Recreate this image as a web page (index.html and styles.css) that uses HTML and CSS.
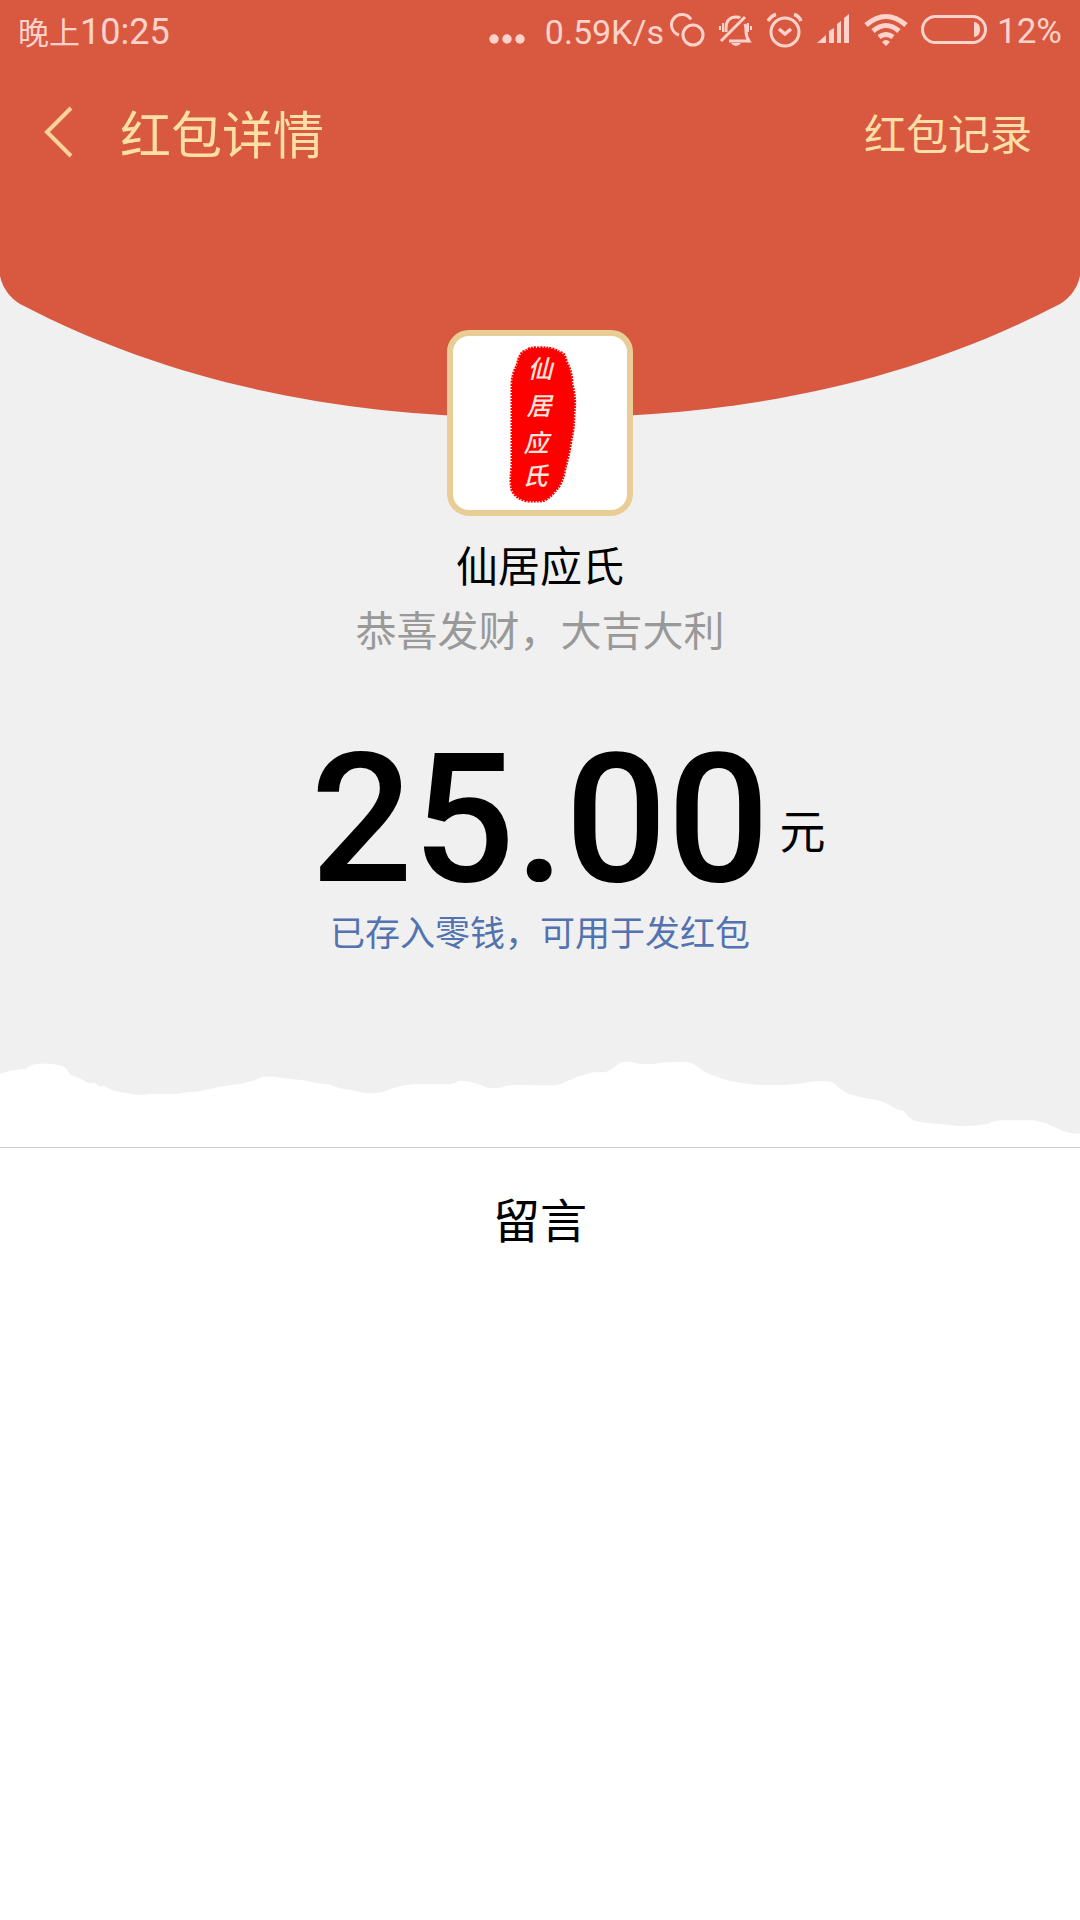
FILE: index.html
```html
<!DOCTYPE html>
<html lang="zh-CN">
<head>
<meta charset="utf-8">
<meta name="viewport" content="width=device-width, initial-scale=1">
<title>红包详情</title>
<link rel="stylesheet" href="styles.css">
</head>
<body>
<header class="top">
  <div class="status">
    <span class="clock"><span class="clock-part">晚上</span>10:25</span>
    <div class="status-right">
      <svg class="ico dots" width="32" height="62" viewBox="490 0 32 62" aria-hidden="true"><g class="fill"><circle cx="495" cy="39" r="4.7"/><circle cx="508" cy="39" r="4.7"/><circle cx="521" cy="39" r="4.7"/></g></svg>
      <span class="speed">0.59K/s</span>
      <svg class="ico" width="30" height="62" viewBox="676 0 30 62" aria-hidden="true"><g class="line"><circle cx="693" cy="35" r="10"/><path d="M679 35A10.500 10.500 0 1 1 691 19.500"/></g></svg>
      <svg class="ico" width="36" height="62" viewBox="718 0 36 62" aria-hidden="true"><g class="line"><path d="M721 41 745 17"/><path d="M726 32V28C726 21 730 17 736 17Q739 17 740 18M745 24Q746 27 746 31C746 36 747 38 749 41H729"/><path d="M720 26V30M723 23V32M748 23V32M751 26V30" stroke-width="2"/></g><path class="fill" d="M731 43H741Q739 46 736 46T731 43"/></svg>
      <svg class="ico" width="38" height="62" viewBox="766 0 38 62" aria-hidden="true"><g class="line"><circle cx="785" cy="32" r="14"/><path d="M779 29 785 34 791 29" stroke-width="3.500"/><path d="M768 21Q771 16 776 14.500M794 14.500Q799 16 801 21" stroke-width="3.500"/></g></svg>
      <svg class="ico" width="36" height="62" viewBox="816 0 36 62" aria-hidden="true"><path class="fill" d="M817 43 826 35V43ZM829 31 834 28V43H829ZM837 24 841 21V43H837ZM844 18 849 14V43H844Z"/></svg>
      <svg class="ico" width="44" height="62" viewBox="864 0 44 62" aria-hidden="true"><g class="line wifi"><path d="M866 25Q886 8 906 25M873 31Q886 20 899 31M879 37Q886 32 893 37"/></g><path class="fill" d="M882 42Q886 38 890 42L886 46Z"/></svg>
      <svg class="ico" width="65" height="62" viewBox="921 0 65 62" aria-hidden="true"><rect class="line" x="923.500" y="16.500" width="63" height="26" rx="13"/><path class="fill" d="M975 22C983 22 983 37 975 37Z"/></svg>
      <span>12%</span>
    </div>
  </div>
  <nav class="bar">
    <button class="back" type="button" aria-label="返回"><svg width="30" height="52" viewBox="0 0 30 52" aria-hidden="true"><path d="M27 2 3 26 27 50"/></svg></button>
    <h1 class="title">红包详情</h1>
    <a class="records" href="#">红包记录</a>
  </nav>
</header>
<main>
  <section class="detail">
    <svg class="curve" viewBox="0 0 1080 142" aria-hidden="true"><path d="M0-2V0Q4 18 20 28C185 114 360 142 540 142S895 114 1060 28Q1076 18 1080 0V-2Z"/></svg>
    <div class="avatar">
      <svg viewBox="0 0 174 174" role="img" aria-label="仙居应氏">
        <path class="seal" d="M84 12Q99 11 106 16Q112 17 113 25Q119 36 119 48Q123 63 121 76Q121 92 118 104Q116 119 112 132Q110 147 102 155Q95 164 88 165H75Q63 163 59 154Q57 145 59 130V50Q59 38 64 30Q67 15 73 15Q77 11 84 12Z"/>
        <g class="seal-text"><text x="87" y="42">仙</text><text x="86" y="79">居</text><text x="83" y="116">应</text><text x="82" y="149">氏</text></g>
      </svg>
    </div>
    <p class="name">仙居应氏</p>
    <p class="wish">恭喜发财，大吉大利</p>
    <p class="amount"><span class="number">25.00</span><span class="unit">元</span></p>
    <a class="wallet" href="#">已存入零钱，可用于发红包</a>
    <svg class="torn" viewBox="0 0 3136 321" preserveAspectRatio="none" aria-hidden="true"><path d="M0 101Q40 88 76 86Q92 71 112 71H145Q182 74 193 86Q200 102 208 106Q235 115 255 128L278 130L287 139H305Q330 156 365 158Q405 170 432 162H515Q540 156 580 154Q640 138 705 131Q725 127 765 110H795Q840 118 885 121Q910 130 955 133Q990 149 1025 151Q1070 166 1112 156Q1160 135 1200 133H1305Q1320 130 1333 123H1357Q1390 131 1412 142Q1440 149 1470 137Q1490 134 1568 136Q1620 140 1650 122Q1690 104 1723 97H1758Q1780 87 1790 76Q1808 61 1830 65Q1863 76 1900 71Q1975 61 2006 68Q2020 74 2042 93Q2110 130 2215 135Q2310 137 2350 126Q2405 119 2422 130Q2440 151 2465 161Q2490 171 2545 180Q2580 190 2603 208L2625 213Q2640 238 2660 243Q2690 251 2755 254Q2800 263 2870 252Q2885 241 2905 241H3000Q3035 247 3065 263Q3095 281 3136 281V321H0Z"/></svg>
  </section>
  <section class="messages">
    <h2 class="messages-title">留言</h2>
  </section>
</main>
</body>
</html>
```
FILE: styles.css
```css
* {
  box-sizing: border-box;
}

body {
  margin: 0;
  background: #fff;
  color: #000;
  font-family: "Noto Sans CJK SC", sans-serif;
  font-size: 42px;
  font-weight: 400;
}

h1, h2, p {
  margin: 0;
  font-weight: inherit;
}

a {
  text-decoration: none;
}

.top {
  min-height: 276px;
  background: #d85940;
}

.status {
  display: flex;
  justify-content: space-between;
  height: 62px;
  padding: 0 18px;
  color: #ffd3cb;
  font-family: Roboto, "Noto Sans CJK SC", sans-serif;
  font-size: 35px;
  line-height: 64px;
}

.clock {
  font-size: 36px;
}

.clock-part {
  font-size: 31px;
}

.speed {
  font-size: 34px;
}

.status-right {
  display: flex;
  gap: 12px;
}

.ico {
  display: block;
  overflow: visible;
}

.dots {
  margin-right: 12px;
}

.fill {
  fill: #ffd3cb;
}

.line {
  fill: none;
  stroke: #ffd3cb;
  stroke-width: 3;
}

.wifi {
  stroke-width: 5;
}

.bar {
  display: flex;
  align-items: center;
  height: 139px;
  padding: 0 48px 0 32px;
  color: #ffdfa8;
}

.back {
  width: 88px;
  height: 88px;
  padding: 0 12px;
  border: 0;
  background: none;
  text-align: left;
}

.back svg {
  display: block;
  fill: none;
  stroke: #ffd3a0;
  stroke-width: 4;
}

.title {
  flex: 1;
  font-size: 51px;
}

.records {
  color: inherit;
}

.detail {
  display: flex;
  flex-direction: column;
  align-items: center;
  background: #f0f0f0;
}

.curve {
  display: block;
  width: 100%;
  overflow: visible;
  fill: #d85940;
}

.avatar {
  position: relative;
  width: 186px;
  height: 186px;
  margin-top: -88px;
  border: 6px solid #e9cd97;
  border-radius: 22px;
  background: #fff;
}

.avatar svg {
  display: block;
}

.seal {
  fill: #f00;
  stroke: #f00;
  stroke-width: 3;
  stroke-dasharray: 2 1;
}

.seal-text {
  fill: #ffe4dc;
  font-size: 25px;
  font-style: italic;
  font-weight: 500;
  text-anchor: middle;
}

.name {
  margin-top: 18px;
  line-height: 60px;
}

.wish {
  margin-top: 4px;
  color: #999;
  font-size: 41px;
  line-height: 60px;
}

.amount {
  display: grid;
  grid-template-columns: 1fr auto 1fr;
  align-items: end;
  width: 100%;
  margin-top: 70px;
}

.number {
  grid-column: 2;
  font-family: Roboto, sans-serif;
  font-size: 180px;
  font-weight: 500;
  line-height: 184px;
}

.unit {
  padding: 0 0 54px 10px;
  font-size: 46px;
  line-height: 60px;
}

.wallet {
  margin-top: -6px;
  color: #5273b0;
  font-size: 35px;
  line-height: 50px;
}

.torn {
  display: block;
  width: 100%;
  height: 107px;
  margin-top: 84px;
  fill: #fff;
}

.messages {
  padding: 36px 0;
  border-top: 1px solid #ccc;
  text-align: center;
}

.messages-title {
  font-size: 47px;
  line-height: 68px;
}
```
